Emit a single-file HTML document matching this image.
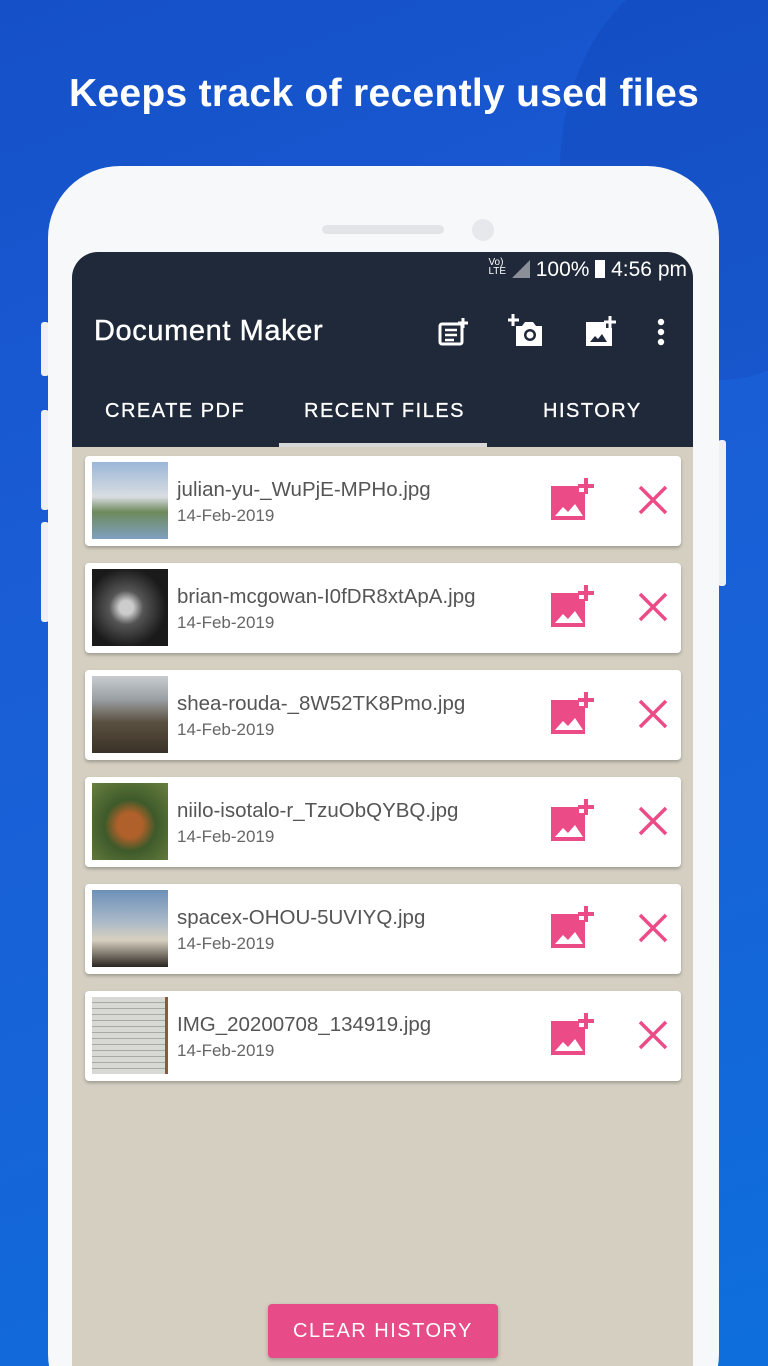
<!DOCTYPE html>
<html><head><style>
*{margin:0;padding:0;box-sizing:border-box}
html,body{width:768px;height:1366px;overflow:hidden}
body{position:relative;font-family:"Liberation Sans",Roboto,sans-serif;background:linear-gradient(160deg,#1550c8 0%,#1a5ed6 40%,#1565d8 70%,#0e6fdc 100%)}
.title{position:absolute;top:72px;width:100%;text-align:center;color:#fff;font-weight:bold;font-size:39px;letter-spacing:0.3px}
.blob{position:absolute;border-radius:50%}
.phone{position:absolute;left:48px;top:166px;width:671px;height:1260px;background:#f7f8fa;border-radius:72px}
.btnside{position:absolute;background:#eef0f3;border-radius:3px}
.speaker{position:absolute;left:322px;top:225px;width:122px;height:9px;border-radius:5px;background:#e2e4e8}
.cam{position:absolute;left:472px;top:219px;width:22px;height:22px;border-radius:50%;background:#e6e8ec}
.screen{position:absolute;left:72px;top:252px;width:621px;height:1114px;background:#d4cfc1;border-radius:26px 26px 0 0;overflow:hidden}
.hdr{position:absolute;left:0;top:0;width:621px;height:195px;background:#1f2939}
.status{position:absolute;right:6px;top:6px;color:#fff;font-size:21px}
.apptitle{position:absolute;left:22px;top:63px;color:#fff;font-size:29px;letter-spacing:0.6px;-webkit-text-stroke:0.4px #fff}
.tab{position:absolute;top:148px;color:#fff;font-size:20px;letter-spacing:1.5px;-webkit-text-stroke:0.3px #fff}
.ul{position:absolute;left:207px;top:191px;width:208px;height:4px;background:#d8d8d8}
.card{position:absolute;left:13px;width:596px;height:90px;background:#fff;border-radius:4px;box-shadow:0 2px 3px rgba(0,0,0,.25)}
.thumb{position:absolute;left:7px;top:6px;width:76px;height:77px}
.nm{position:absolute;left:92px;top:22px;font-size:20.5px;color:#555}
.dt{position:absolute;left:92px;top:50px;font-size:17px;color:#666}
.ic{position:absolute;left:464px;top:22px}
.x{position:absolute;left:552px;top:28px}
.clear{position:absolute;left:196px;top:1052px;width:230px;height:54px;background:#e84c88;border-radius:4px;color:#fff;font-size:20px;letter-spacing:1.5px;text-align:center;line-height:54px;box-shadow:0 2px 4px rgba(0,0,0,.25)}
</style></head><body>
<div class="blob" style="left:560px;top:-40px;width:320px;height:420px;background:rgba(10,40,150,0.15)"></div>
<div class="title">Keeps track of recently used files</div>
<div class="btnside" style="left:41px;top:322px;width:8px;height:54px"></div>
<div class="btnside" style="left:41px;top:410px;width:8px;height:100px"></div>
<div class="btnside" style="left:41px;top:522px;width:8px;height:100px"></div>
<div class="btnside" style="left:718px;top:440px;width:8px;height:146px"></div>
<div class="phone"></div>
<div class="speaker"></div><div class="cam"></div>
<div class="screen">
<div class="hdr">
<div class="status"><span style="font-size:10px;line-height:9px;display:inline-block;vertical-align:2px">Vo)<br>LTE</span> <span style="display:inline-block;width:0;height:0;border-left:18px solid transparent;border-bottom:18px solid #8a8f98;vertical-align:-2px"></span> 100% <span style="display:inline-block;width:10px;height:18px;background:#fff;vertical-align:-2px"></span> 4:56 pm</div>
<div class="apptitle">Document Maker</div>
<svg style="position:absolute;left:366px;top:66px" width="30" height="28" viewBox="0 0 30 28"><rect x="2" y="6" width="22" height="20" rx="2" fill="none" stroke="#fff" stroke-width="3"/><path d="M7 12h12M7 17h12M7 22h9" stroke="#fff" stroke-width="2.5"/><path d="M25 0v10M20 5h10" stroke="#fff" stroke-width="3"/></svg>
<svg style="position:absolute;left:436px;top:62px" width="38" height="34" viewBox="0 0 38 34"><path d="M5 0v12M-1 6h12" stroke="#fff" stroke-width="3"/><path d="M8 12h6l3-4h8l3 4h6v20H8z" fill="#fff"/><circle cx="22" cy="21" r="6" fill="#1f2939"/><circle cx="22" cy="21" r="3.5" fill="#fff"/></svg>
<svg style="position:absolute;left:512px;top:64px" width="34" height="32" viewBox="0 0 34 32"><path d="M2 6h20v6h6v18H2z" fill="#fff"/><path d="M26 0v12M20 6h12" stroke="#fff" stroke-width="3"/><path d="M6 26l5-6 3 3 4-5 5 8z" fill="#1f2939"/></svg>
<svg style="position:absolute;left:585px;top:66px" width="8" height="28"><circle cx="4" cy="4" r="3.2" fill="#fff"/><circle cx="4" cy="14" r="3.2" fill="#fff"/><circle cx="4" cy="24" r="3.2" fill="#fff"/></svg>
<div class="tab" style="left:33px">CREATE PDF</div>
<div class="tab" style="left:232px">RECENT FILES</div>
<div class="tab" style="left:471px">HISTORY</div>
<div class="ul"></div>
</div>
<div class="card" style="top:204px"><div class="thumb" style="background:linear-gradient(#9bb7d8 0%,#d9dde2 45%,#6d8a5c 65%,#7fa0c0 100%)"></div><div class="nm">julian-yu-_WuPjE-MPHo.jpg</div><div class="dt">14-Feb-2019</div>
<svg class="ic" width="46" height="44" viewBox="0 0 46 44"><path d="M2 8h28v6h6v28H2z" fill="#eb4c88"/><path d="M37 0v16M29 8h16" stroke="#eb4c88" stroke-width="4"/><path d="M6 38l8-9 5 5 7-8 8 12z" fill="#fff"/></svg>
<svg class="x" width="32" height="32"><path d="M3 3l26 26M29 3L3 29" stroke="#eb4c88" stroke-width="3.5"/></svg></div>
<div class="card" style="top:311px"><div class="thumb" style="background:radial-gradient(circle at 45% 50%,#ccc 0 12%,#555 30%,#1a1a1a 70%)"></div><div class="nm">brian-mcgowan-I0fDR8xtApA.jpg</div><div class="dt">14-Feb-2019</div>
<svg class="ic" width="46" height="44" viewBox="0 0 46 44"><path d="M2 8h28v6h6v28H2z" fill="#eb4c88"/><path d="M37 0v16M29 8h16" stroke="#eb4c88" stroke-width="4"/><path d="M6 38l8-9 5 5 7-8 8 12z" fill="#fff"/></svg>
<svg class="x" width="32" height="32"><path d="M3 3l26 26M29 3L3 29" stroke="#eb4c88" stroke-width="3.5"/></svg></div>
<div class="card" style="top:418px"><div class="thumb" style="background:linear-gradient(#c8ccd0 0%,#9aa0a4 30%,#5a5040 60%,#3a3228 100%)"></div><div class="nm">shea-rouda-_8W52TK8Pmo.jpg</div><div class="dt">14-Feb-2019</div>
<svg class="ic" width="46" height="44" viewBox="0 0 46 44"><path d="M2 8h28v6h6v28H2z" fill="#eb4c88"/><path d="M37 0v16M29 8h16" stroke="#eb4c88" stroke-width="4"/><path d="M6 38l8-9 5 5 7-8 8 12z" fill="#fff"/></svg>
<svg class="x" width="32" height="32"><path d="M3 3l26 26M29 3L3 29" stroke="#eb4c88" stroke-width="3.5"/></svg></div>
<div class="card" style="top:525px"><div class="thumb" style="background:radial-gradient(circle at 50% 55%,#b0602a 0 22%,#3e5a2a 45%,#6a8040 100%)"></div><div class="nm">niilo-isotalo-r_TzuObQYBQ.jpg</div><div class="dt">14-Feb-2019</div>
<svg class="ic" width="46" height="44" viewBox="0 0 46 44"><path d="M2 8h28v6h6v28H2z" fill="#eb4c88"/><path d="M37 0v16M29 8h16" stroke="#eb4c88" stroke-width="4"/><path d="M6 38l8-9 5 5 7-8 8 12z" fill="#fff"/></svg>
<svg class="x" width="32" height="32"><path d="M3 3l26 26M29 3L3 29" stroke="#eb4c88" stroke-width="3.5"/></svg></div>
<div class="card" style="top:632px"><div class="thumb" style="background:linear-gradient(#6d90b8 0%,#a8b8c8 40%,#d8d0c0 65%,#2a2520 100%)"></div><div class="nm">spacex-OHOU-5UVIYQ.jpg</div><div class="dt">14-Feb-2019</div>
<svg class="ic" width="46" height="44" viewBox="0 0 46 44"><path d="M2 8h28v6h6v28H2z" fill="#eb4c88"/><path d="M37 0v16M29 8h16" stroke="#eb4c88" stroke-width="4"/><path d="M6 38l8-9 5 5 7-8 8 12z" fill="#fff"/></svg>
<svg class="x" width="32" height="32"><path d="M3 3l26 26M29 3L3 29" stroke="#eb4c88" stroke-width="3.5"/></svg></div>
<div class="card" style="top:739px"><div class="thumb" style="background:repeating-linear-gradient(#d8d8d4 0 5px,#a8a8a4 5px 6px);border-right:3px solid #8a5a3a"></div><div class="nm">IMG_20200708_134919.jpg</div><div class="dt">14-Feb-2019</div>
<svg class="ic" width="46" height="44" viewBox="0 0 46 44"><path d="M2 8h28v6h6v28H2z" fill="#eb4c88"/><path d="M37 0v16M29 8h16" stroke="#eb4c88" stroke-width="4"/><path d="M6 38l8-9 5 5 7-8 8 12z" fill="#fff"/></svg>
<svg class="x" width="32" height="32"><path d="M3 3l26 26M29 3L3 29" stroke="#eb4c88" stroke-width="3.5"/></svg></div>
<div class="clear">CLEAR HISTORY</div>
</div>
</body></html>
